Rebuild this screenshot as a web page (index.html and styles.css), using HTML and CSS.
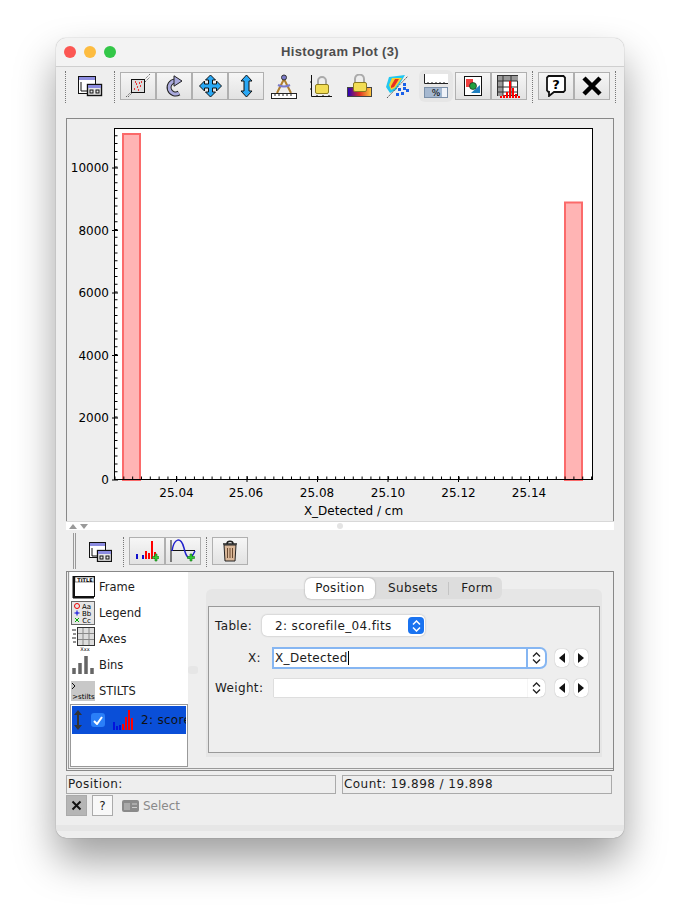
FILE: index.html
```html
<!DOCTYPE html>
<html lang="en">
<head>
    <meta charset="UTF-8">
    <meta name="viewport" content="width=device-width, initial-scale=1.0">
    <title>Histogram Plot (3)</title>
    <link rel="stylesheet" href="styles.css">
</head>
<body>
    <div class="window">
        <div class="titlebar">
            <div class="lights">
                <span class="light red"></span>
                <span class="light yellow"></span>
                <span class="light green"></span>
            </div>
            <div class="title">Histogram Plot (3)</div>
        </div>

        <!-- main toolbar -->
        <div class="toolbar">
            <span class="dots"></span>
            <span class="tool wide">
                <svg width="26" height="22" viewBox="0 0 26 22"><rect x="1.5" y="1.5" width="17" height="17" fill="#fff" stroke="#111"/><rect x="2" y="2" width="16" height="3" fill="#8c8ce0"/><path d="M4 7v9h7" fill="none" stroke="#111"/><rect x="10.5" y="9.5" width="14" height="11" fill="#e8e8e8" stroke="#111" stroke-width="1.4"/><rect x="11" y="10" width="13" height="3" fill="#8c8ce0"/><rect x="13" y="15" width="3" height="3" fill="none" stroke="#111"/><rect x="19" y="15" width="3" height="3" fill="none" stroke="#111"/></svg>
            </span>
            <span class="dots"></span>
            <div class="group first">
                <span class="btn">
                    <svg width="26" height="24" viewBox="0 0 26 24"><path d="M1 23l6-6M3 23l5-5M19 6l6-6M20 8l5-5" stroke="#333" stroke-dasharray="1 1.5"/><rect x="6.500" y="5.500" width="13" height="13" fill="#ddd" stroke="#111"/><path d="M9 15h1M11 10h1M12 13h1M14 9h1M15 12h1M10 8h1M16 8h1M13 16h1" stroke="#e00" stroke-width="1.500"/></svg>
                </span>
                <span class="btn">
                    <svg width="18" height="22" viewBox="0 0 18 22"><path d="M10 6A6.500 6.500 0 1 0 14 18" fill="none" stroke="#222" stroke-width="5"/><path d="M10 6A6.500 6.500 0 1 0 14 18" fill="none" stroke="#a9a9dc" stroke-width="3"/><path d="M9 .8L17 6l-8 5.200z" fill="#a9a9dc" stroke="#222"/></svg>
                </span>
                <span class="btn">
                    <svg width="25" height="24" viewBox="0 0 25 24"><path d="M12.500 1l5 5h-3v4h4V7l5 5-5 5v-3h-4v4h3l-5 5-5-5h3v-4h-4v3l-5-5 5-5v3h4V6h-3z" fill="#29a8f5" stroke="#111"/></svg>
                </span>
                <span class="btn">
                    <svg width="13" height="24" viewBox="0 0 13 24"><path d="M6.500 1l5.500 6H9v10h3l-5.500 6L1 17h3V7H1z" fill="#29a8f5" stroke="#111"/></svg>
                </span>
            </div>
            <span class="tool">
                <svg width="26" height="25" viewBox="0 0 26 25"><path d="M13 5L6 19M13 5l7 14" stroke="#b08030" stroke-width="2"/><circle cx="13" cy="3.500" r="2.500" fill="#7a7ac8" stroke="#333"/><path d="M7 11c4 2 8 2 12 0" fill="none" stroke="#7a7ac8" stroke-width="2"/><rect x=".500" y="19.500" width="25" height="5" fill="#fff" stroke="#222"/><path d="M4 20v2M8 20v2M12 20v2M16 20v2M20 20v2" stroke="#222"/></svg>
            </span>
            <span class="tool">
                <svg width="24" height="24" viewBox="0 0 24 24"><path d="M2.500 1v21.500H23" fill="none" stroke="#111"/><path d="M1 8h2M1 15h2M8 21v2M14 21v2M20 21v2" stroke="#111"/><path d="M9 11V7a4 4 0 0 1 8 0v4" fill="none" stroke="#aaa" stroke-width="2"/><rect x="6.500" y="10.500" width="13" height="9" rx="1.500" fill="#f2dd55" stroke="#8a7a20"/></svg>
            </span>
            <span class="tool">
                <svg width="28" height="24" viewBox="0 0 28 24"><defs><linearGradient id="heat"><stop offset="0" stop-color="#2000c0"/><stop offset=".5" stop-color="#e03020"/><stop offset="1" stop-color="#ffd040"/></linearGradient></defs><rect x="2.500" y="13.500" width="24" height="9" fill="url(#heat)" stroke="#444"/><path d="M10 9V5a4.500 4.500 0 0 1 9 0v4" fill="none" stroke="#aaa" stroke-width="2"/><rect x="8.500" y="8.500" width="13" height="9" rx="1.500" fill="#f2dd55" stroke="#8a7a20"/></svg>
            </span>
            <span class="tool">
                <svg width="26" height="26" viewBox="0 0 26 26"><path d="M2 14L5 4l16-2-9 15-6 3z" fill="#22c8f0"/><path d="M5 12l3-7h10l-7 10-4 2z" fill="#f4d030"/><path d="M7 13l4-7h4l-5 8-3 1z" fill="#e83020"/><path d="M3 25L24 3" stroke="#555" stroke-dasharray="2 1"/><path d="M14 15h3v3h-3zM19 10h3v3h-3zM17 19h3v3h-3zM22 16h3v3h-3zM12 20h3v3h-3zM19 14h3v3h-3z" fill="#1a60e8"/></svg>
            </span>
            <span class="tool aux">
                <svg width="24" height="24" viewBox="0 0 24 24"><rect width="24" height="10" fill="#fff"/><path d="M.500 0v9.500H24" fill="none" stroke="#222"/><path d="M4 8v1M8 8v1M12 8v1M16 8v1M20 8v1" stroke="#222"/><rect x=".500" y="13.500" width="23" height="10" fill="#eef2f8" stroke="#7a8fa8"/><rect x="1" y="14" width="17" height="9" fill="#a5b8d0"/><text x="12" y="22" class="pct">%</text></svg>
            </span>
            <div class="group">
                <span class="btn">
                    <svg width="18" height="20" viewBox="0 0 18 20"><rect x=".500" y=".500" width="17" height="19" fill="#fff" stroke="#111"/><path d="M2 3h7v6l-3 2H2z" fill="#f04040"/><path d="M16 17H7l9-8z" fill="#2080c0"/><circle cx="9" cy="10" r="3.500" fill="#20a040" stroke="#111" stroke-width=".6"/></svg>
                </span>
                <span class="btn">
                    <svg width="24" height="23" viewBox="0 0 24 23"><rect x=".500" y=".500" width="20" height="20" fill="#fff" stroke="#333"/><path d="M1 1h20v5H1zM1 6h5v15H1z" fill="#999"/><path d="M.500 6h20M.500 12h20M.500 17h20M6 1v20M14 1v20" stroke="#333"/><path d="M7 23V20M10 23V17M13 23V6M16 23V13M19 23V19M22 23V21M4 23V21" stroke="#f00" stroke-width="2"/></svg>
                </span>
            </div>
            <span class="dots near"></span>
            <div class="group near">
                <span class="btn">
                    <svg width="20" height="22" viewBox="0 0 20 22"><path d="M2.500 1h15l1.500 1.500v13L17.500 17H8l-5 4v-4H2.500L1 15.500v-13z" fill="#fff" stroke="#111" stroke-width="1.800"/><text x="10" y="14" class="qmark">?</text></svg>
                </span>
                <span class="btn">
                    <svg width="20" height="20" viewBox="0 0 20 20"><path d="M2 2l16 16M18 2L2 18" stroke="#000" stroke-width="4.500"/></svg>
                </span>
            </div>
            <span class="dots near"></span>
        </div>

        <!-- plot -->
        <div class="plot-panel">
            <svg class="plot" width="546" height="401" viewBox="67 119 546 401">
                <rect x="114.500" y="128.500" width="478" height="351" fill="#fff"/>
                <rect x="123" y="134" width="17" height="346" class="bar"/>
                <rect x="565" y="202.500" width="17" height="277.500" class="bar"/>
                <rect x="114.500" y="128.500" width="478" height="351" fill="none" stroke="#000"/>

                <line x1="116" y1="480" x2="116" y2="128" class="minor-y"/>
                <line x1="114.500" y1="478" x2="592" y2="478" class="minor-x"/>
                <path d="M112 480h6M112 418h6M112 355.500h6M112 293h6M112 230.500h6M112 168h6" class="major"/>
                <path d="M176.500 482v-6M247 482v-6M317.500 482v-6M388 482v-6M458.500 482v-6M529.500 482v-6" class="major"/>

                <g class="y-labels">
                    <text x="109" y="172">10000</text>
                    <text x="109" y="235">8000</text>
                    <text x="109" y="297">6000</text>
                    <text x="109" y="360">4000</text>
                    <text x="109" y="422">2000</text>
                    <text x="109" y="484">0</text>
                </g>
                <g class="x-labels">
                    <text x="176.500" y="497">25.04</text>
                    <text x="246" y="497">25.06</text>
                    <text x="317" y="497">25.08</text>
                    <text x="388" y="497">25.10</text>
                    <text x="458.500" y="497">25.12</text>
                    <text x="529" y="497">25.14</text>
                    <text x="353.500" y="515">X_Detected / cm</text>
                </g>
            </svg>
        </div>

        <div class="split">
            <span class="arrow-up"></span>
            <span class="arrow-down"></span>
            <span class="split-dot"></span>
        </div>

        <!-- layer toolbar -->
        <div class="subbar">
            <span class="grip"></span>
            <span class="tool sub-wide">
                <svg width="24" height="21" viewBox="0 0 24 21"><rect x="1.500" y="1.500" width="16" height="15" fill="#fff" stroke="#111"/><rect x="2" y="2" width="15" height="3" fill="#8c8ce0"/><path d="M4 7v8h6" fill="none" stroke="#111"/><rect x="9.500" y="9.500" width="14" height="11" fill="#e8e8e8" stroke="#111" stroke-width="1.300"/><rect x="10" y="10" width="13" height="3" fill="#8c8ce0"/><rect x="12" y="15" width="3" height="3" fill="none" stroke="#111"/><rect x="18" y="15" width="3" height="3" fill="none" stroke="#111"/></svg>
            </span>
            <span class="dots short"></span>
            <div class="group sub">
                <span class="btn">
                    <svg width="24" height="22" viewBox="0 0 24 22"><path d="M2 19v-5M8 19v-4" stroke="#11c" stroke-width="2"/><path d="M11 19v-8M14 19v-6M17 19V1M20 19v-7" stroke="#f00" stroke-width="2"/><path d="M20 14h2v2.500h2.500v2H22V21h-2v-2.500h-2.500v-2H20z" fill="#3c3" stroke="#171" stroke-width=".6"/></svg>
                </span>
                <span class="btn">
                    <svg width="26" height="24" viewBox="0 0 26 24"><path d="M1 1v22M1 11.500h24" stroke="#111"/><path d="M2 12C4 -1 11 -3 14 9c2 9 5 12 8 8 1-1 2-3 3-5" fill="none" stroke="#22c" stroke-width="1.500"/><path d="M20 15h2v2.500h2.500v2H22V22h-2v-2.500h-2.500v-2H20z" fill="#3c3" stroke="#171" stroke-width=".6"/></svg>
                </span>
            </div>
            <span class="dots short"></span>
            <div class="group sub">
                <span class="btn">
                    <svg width="16" height="22" viewBox="0 0 16 22"><path d="M1 4h14M5 3.500c0-3 6-3 6 0" fill="none" stroke="#222" stroke-width="1.500"/><path d="M2 5h12l-1 16H3z" fill="#dab89a" stroke="#222"/><path d="M5.500 8v10M8 8v10M10.500 8v10" stroke="#6a4a30"/></svg>
                </span>
            </div>
        </div>

        <!-- control stack and form -->
        <div class="control-panel">
            <div class="control-inner">
                <div class="stack">
                    <div class="stack-item">
                        <svg width="24" height="24" viewBox="0 0 24 24"><rect x="3.500" y="1.500" width="20" height="20" fill="#fff" stroke="#111"/><rect x="4" y="2" width="19" height="5" fill="#fff" stroke="#111" stroke-width=".5"/><text x="14" y="6.500" class="tiny bold">TITLE</text><path d="M2.500 1v22M2 22.500h21" stroke="#111" stroke-width="2"/></svg>
                        <span>Frame</span>
                    </div>
                    <div class="stack-item">
                        <svg width="24" height="24" viewBox="0 0 24 24"><rect x=".500" y=".500" width="23" height="23" fill="#e6e6e6" stroke="#666"/><circle cx="6" cy="5" r="2.500" fill="none" stroke="#e00"/><path d="M6 9.500v5M3.500 12h5" stroke="#00d"/><path d="M4 17l4 4M8 17l-4 4" stroke="#0a0"/><text x="15.500" y="8" class="small">Aa</text><text x="15.500" y="15" class="small">Bb</text><text x="15.500" y="22" class="small">Cc</text></svg>
                        <span>Legend</span>
                    </div>
                    <div class="stack-item">
                        <svg width="24" height="24" viewBox="0 0 24 24"><rect x="6.500" y=".500" width="17" height="18" fill="#ddd" stroke="#333"/><path d="M12 1v17M18 1v17M7 6.500h16M7 12.500h16" stroke="#888"/><path d="M1 3h4M2 7h3M1 11h4M2 15h3" stroke="#222"/><text x="14" y="24" class="tiny">Xxx</text></svg>
                        <span>Axes</span>
                    </div>
                    <div class="stack-item">
                        <svg width="24" height="20" viewBox="0 0 24 20"><path d="M3 19v-6M9 19V8M15 19V1M21 19v-6" stroke="#666" stroke-width="3.500"/></svg>
                        <span>Bins</span>
                    </div>
                    <div class="stack-item">
                        <svg width="24" height="20" viewBox="0 0 24 20"><rect width="24" height="20" fill="#c8c8c8"/><path d="M1 2l3 3-3 3" fill="none" stroke="#111"/><text x="12.500" y="18" class="shell">&gt;stilts</text></svg>
                        <span>STILTS</span>
                    </div>
                    <div class="layers">
                        <div class="layer">
                            <svg class="layer-grip" width="10" height="20" viewBox="0 0 10 20"><path d="M5 0l4 5H6v10h3l-4 5-4-5h3V5H1z" fill="#333"/></svg>
                            <span class="check">
                                <svg width="10" height="9" viewBox="0 0 10 9"><path d="M1 5l3 3 5-7" fill="none" stroke="#fff" stroke-width="2"/></svg>
                            </span>
                            <svg class="layer-hist" width="20" height="20" viewBox="0 0 20 20"><path d="M1 20v-8M4 20v-4M7 20v-5" stroke="#00d" stroke-width="1.500"/><path d="M10 20v-6M13 20V7M16 20V0M19 20V8" stroke="#f00" stroke-width="2"/></svg>
                            <span class="layer-name">2: scorefile_04.fits</span>
                        </div>
                    </div>
                </div>

                <div class="divider"><span class="divider-dot"></span></div>

                <div class="tabs-area">
                    <div class="tabs">
                        <span class="tab active">Position</span>
                        <span class="tab subsets">Subsets</span>
                        <span class="tab-line"></span>
                        <span class="tab last">Form</span>
                    </div>
                    <div class="pane">
                        <div class="pane-inner">
                            <div class="table-row">
                                <label class="table-label">Table:</label>
                                <div class="combo">
                                    <span class="combo-text">2: scorefile_04.fits</span>
                                    <span class="stepper">
                                        <svg width="9" height="12" viewBox="0 0 9 12"><path d="M1 4.500l3.500-3.500 3.500 3.500M1 7.500l3.500 3.500 3.500-3.500" fill="none" stroke="#fff" stroke-width="1.500"/></svg>
                                    </span>
                                </div>
                            </div>
                            <div class="coord-row">
                                <label class="coord-label">X:</label>
                                <div class="field focus">
                                    <span class="field-text">X_Detected</span>
                                    <span class="caret"></span>
                                </div>
                                <span class="spin focus-spin">
                                    <svg width="9" height="12" viewBox="0 0 9 12"><path d="M1 4.500l3.500-3.500 3.500 3.500M1 7.500l3.500 3.500 3.500-3.500" fill="none" stroke="#222" stroke-width="1.300"/></svg>
                                </span>
                                <span class="pill"><span class="tri-left"></span></span>
                                <span class="pill"><span class="tri-right"></span></span>
                            </div>
                            <div class="coord-row">
                                <label class="coord-label">Weight:</label>
                                <div class="field"></div>
                                <span class="spin">
                                    <svg width="9" height="12" viewBox="0 0 9 12"><path d="M1 4.500l3.500-3.500 3.500 3.500M1 7.500l3.500 3.500 3.500-3.500" fill="none" stroke="#222" stroke-width="1.300"/></svg>
                                </span>
                                <span class="pill"><span class="tri-left"></span></span>
                                <span class="pill"><span class="tri-right"></span></span>
                            </div>
                        </div>
                    </div>
                </div>
            </div>
        </div>

        <!-- status -->
        <div class="status">
            <div class="status-box">Position:</div>
            <div class="status-box">Count: 19.898 / 19.898</div>
        </div>
        <div class="progress-row">
            <span class="mini dark">
                <svg width="11" height="11" viewBox="0 0 11 11"><path d="M1.500 1.500l8 8M9.500 1.500l-8 8" stroke="#111" stroke-width="2"/></svg>
            </span>
            <span class="mini">?</span>
            <span class="select-action">
                <svg width="17" height="12" viewBox="0 0 17 12"><rect width="17" height="12" rx="2" fill="#8a8a8a"/><rect x="2" y="3" width="6" height="7" fill="#aaa"/><path d="M10 4h5M10 7.500h5" stroke="#ccc"/></svg>
                Select
            </span>
        </div>
        <div class="bottom-bar"></div>
    </div>
</body>
</html>
```
FILE: styles.css
```css
html, body {
    margin: 0;
    padding: 0;
    background-color: #fff;
}
body {
    width: 680px;
    height: 912px;
    overflow: hidden;
    font-family: "DejaVu Sans", sans-serif;
    font-size: 12px;
    color: #1c1c1c;
}
.window {
    box-sizing: border-box;
    width: 568px;
    height: 800px;
    margin: 38px 0 0 56px;
    background-color: #eeeeee;
    border-radius: 10px;
    box-shadow: 0 0 1px rgba(0,0,0,0.5), 0 22px 40px rgba(0,0,0,0.38);
    overflow: hidden;
}
.titlebar {
    position: relative;
    height: 28px;
    background-color: #f3f3f3;
    border-bottom: 1px solid #cfcfcf;
    box-sizing: content-box;
}
.lights {
    display: flex;
    gap: 8px;
    padding: 8px 0 0 8px;
}
.light {
    width: 12px;
    height: 12px;
    border-radius: 50%;
}
.red { background-color: #fc5753; }
.yellow { background-color: #fdbc40; }
.green { background-color: #33c748; }
.title {
    position: absolute;
    left: 0;
    right: 0;
    top: 6px;
    text-align: center;
    font-family: "Liberation Sans", sans-serif;
    font-weight: bold;
    font-size: 13px;
    letter-spacing: 0.33px;
    color: #4d4d4d;
}

/* toolbars */
.toolbar {
    display: flex;
    align-items: center;
    height: 38px;
    padding-left: 9px;
}
.dots {
    width: 0;
    height: 32px;
    border-left: 1px dotted #777;
    margin-top: 1px;
}
.dots.short { height: 36px; }
.dots.near { margin-left: 5px; }
.tool {
    display: flex;
    align-items: center;
    justify-content: center;
    width: 37.6px;
    height: 32px;
}
.tool.wide { width: 48px; }
.tool.aux {
    width: 34px;
    margin: 0 2px 0 3.6px;
    background-color: #e6e6e6;
    border-radius: 6px;
}
.group {
    display: flex;
}
.group.first { margin-left: 5px; margin-right: 1px; }
.group.near { margin-left: 5px; }
.btn {
    box-sizing: border-box;
    display: flex;
    align-items: center;
    justify-content: center;
    width: 36px;
    height: 28px;
    border: 1px solid #b0b0b0;
    background: linear-gradient(#f6f6f6, #e2e2e2);
}

/* plot */
.plot-panel {
    width: 546px;
    height: 402px;
    margin: 13px 0 0 10px;
    border: 1px solid #888;
    border-bottom: none;
}
.plot {
    display: block;
    font-family: "DejaVu Sans", sans-serif;
    font-size: 12px;
}
.bar {
    fill: #ffb4b4;
    stroke: #fb6a6a;
    stroke-width: 2;
}
.minor-y {
    stroke: #000;
    stroke-width: 3;
    stroke-dasharray: 1 6.8125;
}
.minor-x {
    stroke: #000;
    stroke-width: 3;
    stroke-dasharray: 1 7.825;
}
.major {
    fill: none;
    stroke: #000;
}
.y-labels text { text-anchor: end; }
.x-labels text { text-anchor: middle; }
.split {
    display: flex;
    align-items: center;
    gap: 3px;
    position: relative;
    box-sizing: border-box;
    height: 9px;
    margin: 0 10px;
    width: 548px;
    padding-left: 3px;
    background-color: #fff;
    border-top: 1px solid #d8d8d8;
}
.arrow-up {
    border: 4px solid transparent;
    border-top: none;
    border-bottom: 5px solid #999;
}
.arrow-down {
    border: 4px solid transparent;
    border-bottom: none;
    border-top: 5px solid #999;
}
.split-dot {
    position: absolute;
    left: 271px;
    top: 1px;
    width: 6px;
    height: 6px;
    border-radius: 50%;
    background-color: #e4e4e4;
}
.subbar {
    display: flex;
    align-items: center;
    height: 42px;
    padding-left: 17px;
}
.grip {
    width: 1px;
    height: 36px;
    border-left: 1px solid #999;
    border-right: 1px solid #999;
}
.tool.sub-wide { width: 47px; }
.group.sub { margin: 0 5px; }
.subbar .dots { height: 30px; }

/* control panel */
.control-panel {
    box-sizing: border-box;
    width: 548px;
    height: 200px;
    margin-left: 10px;
    border: 1px solid #888;
    padding: 0 0 1px 1px;
    margin-top: -1px;
}
.control-inner {
    box-sizing: border-box;
    display: flex;
    height: 100%;
    border: 1px solid #999;
    border-top: none;
    border-right: none;
    padding: 0 0 1px 1px;
}
.stack {
    display: flex;
    flex-direction: column;
    width: 118px;
    background-color: #fff;
    padding-top: 2px;
    flex-shrink: 0;
    font-size: 11.5px;
}
.stack-item {
    display: flex;
    align-items: center;
    gap: 4px;
    height: 26px;
    padding-left: 1px;
}
.stack-item svg { flex-shrink: 0; }
.layers {
    box-sizing: border-box;
    flex: 1;
    border: 1px solid #999;
    padding: 1px;
    overflow: hidden;
}
.layer {
    display: flex;
    align-items: center;
    height: 28px;
    background-color: #0a4fd8;
    padding-left: 1px;
    overflow: hidden;
    white-space: nowrap;
    color: #111;
}
.layer-grip { flex-shrink: 0; }
.check {
    display: flex;
    align-items: center;
    justify-content: center;
    flex-shrink: 0;
    width: 14px;
    height: 14px;
    margin: 0 8px 0 8px;
    border-radius: 3px;
    background-color: #2a7ff8;
}
.layer-hist { flex-shrink: 0; margin-right: 8px; }
.layer-name { font-size: 12px; letter-spacing: 0.3px; }
.tiny {
    font: 5px "DejaVu Sans", sans-serif;
    text-anchor: middle;
}
.tiny.bold { font-weight: bold; }
.small {
    font: 7px "DejaVu Sans", sans-serif;
    text-anchor: middle;
}
.shell {
    font: 7px "DejaVu Sans", sans-serif;
    text-anchor: middle;
}
.pct {
    font: 9px "DejaVu Sans", sans-serif;
    text-anchor: middle;
}
.qmark {
    font: bold 13px "DejaVu Sans", sans-serif;
    text-anchor: middle;
}
.divider {
    display: flex;
    align-items: center;
    width: 18px;
    flex-shrink: 0;
}
.divider-dot {
    display: block;
    width: 10px;
    height: 8px;
    background-color: #e6e6e6;
    border-radius: 3px;
}
.tabs-area {
    position: relative;
    flex: 1;
    padding-top: 5px;
    letter-spacing: 0.35px;
}
.tabs {
    position: relative;
    z-index: 1;
    display: flex;
    align-items: center;
    width: 197px;
    height: 22px;
    margin-left: 99px;
    background-color: #dddddd;
    border-radius: 6px;
}
.tab {
    box-sizing: border-box;
    width: 72px;
    text-align: center;
}
.tab.active {
    width: 70px;
    height: 21px;
    line-height: 21px;
    background-color: #fff;
    border-radius: 6px;
    box-shadow: 0 0 2px rgba(0,0,0,0.35);
}
.tab.subsets {
    width: 73px;
    padding-left: 3px;
}
.tab-line {
    height: 13px;
    border-left: 1px solid #c4c4c4;
}
.tab.last {
    width: 53px;
    padding-left: 3px;
}
.pane {
    margin: -10px 13px 0 0;
    width: 396px;
    height: 168px;
    box-sizing: border-box;
    padding: 17px 2px 4px 2px;
    background-color: #e6e6e6;
    border-radius: 6px 6px 0 0;
}
.pane-inner {
    box-sizing: border-box;
    height: 100%;
    background-color: #eeeeee;
    border: 1px solid #999;
    padding: 8px 0 0 6px;
}
.table-row {
    display: flex;
    align-items: center;
    height: 21px;
    margin-bottom: 13px;
}
.table-label {
    width: 47px;
}
.combo {
    box-sizing: border-box;
    display: flex;
    align-items: center;
    justify-content: space-between;
    width: 163px;
    height: 21px;
    padding: 0 1px 0 13px;
    background-color: #fff;
    border-radius: 5px;
    box-shadow: 0 0 2px rgba(0,0,0,0.3);
}
.stepper {
    display: flex;
    align-items: center;
    justify-content: center;
    width: 16px;
    height: 17px;
    background-color: #1a73f0;
    border-radius: 4px;
}
.coord-row {
    display: flex;
    align-items: center;
    height: 18px;
    margin-bottom: 12px;
}
.coord-label {
    box-sizing: border-box;
    width: 46px;
    margin-right: 13px;
    text-align: right;
    white-space: nowrap;
}
.field {
    box-sizing: border-box;
    display: flex;
    align-items: center;
    width: 254px;
    height: 18px;
    padding-left: 1px;
    background-color: #fff;
    box-shadow: 0 0 1px rgba(0,0,0,0.4);
}
.field.focus { box-shadow: 0 0 0 2px #86b6f2; }
.caret {
    width: 1px;
    height: 14px;
    background-color: #000;
}
.spin {
    display: flex;
    align-items: center;
    justify-content: center;
    width: 17px;
    height: 18px;
    margin-right: 10px;
    background-color: #fff;
    border-radius: 0 5px 5px 0;
    box-shadow: 0 0 1px rgba(0,0,0,0.4);
}
.focus-spin { box-shadow: 0 0 0 2px #86b6f2; }
.pill {
    display: flex;
    align-items: center;
    justify-content: center;
    width: 14px;
    height: 18px;
    margin-right: 5px;
    background-color: #fff;
    border-radius: 5px;
    box-shadow: 0 0 1px rgba(0,0,0,0.4);
}
.tri-left {
    border: 5px solid transparent;
    border-left: none;
    border-right: 6px solid #111;
}
.tri-right {
    border: 5px solid transparent;
    border-right: none;
    border-left: 6px solid #111;
}

/* status */
.status {
    display: flex;
    gap: 6px;
    margin: 4px 0 0 10px;
    letter-spacing: 0.45px;
}
.status-box {
    box-sizing: border-box;
    width: 270px;
    height: 19px;
    line-height: 17px;
    padding-left: 1px;
    border: 1px solid #aaa;
    white-space: nowrap;
}
.progress-row {
    display: flex;
    align-items: center;
    gap: 5px;
    margin: 1px 0 0 10px;
    height: 21px;
}
.mini {
    box-sizing: border-box;
    display: flex;
    align-items: center;
    justify-content: center;
    width: 21px;
    height: 21px;
    border: 1px solid #aaa;
    background-color: #f8f8f8;
}
.mini.dark { background-color: #b5b5b5; }
.select-action {
    display: flex;
    align-items: center;
    gap: 4px;
    margin-left: 4px;
    color: #8a8a8a;
}
.bottom-bar {
    height: 6px;
    margin-top: 9px;
    background-color: #e6e6e6;
}
```
